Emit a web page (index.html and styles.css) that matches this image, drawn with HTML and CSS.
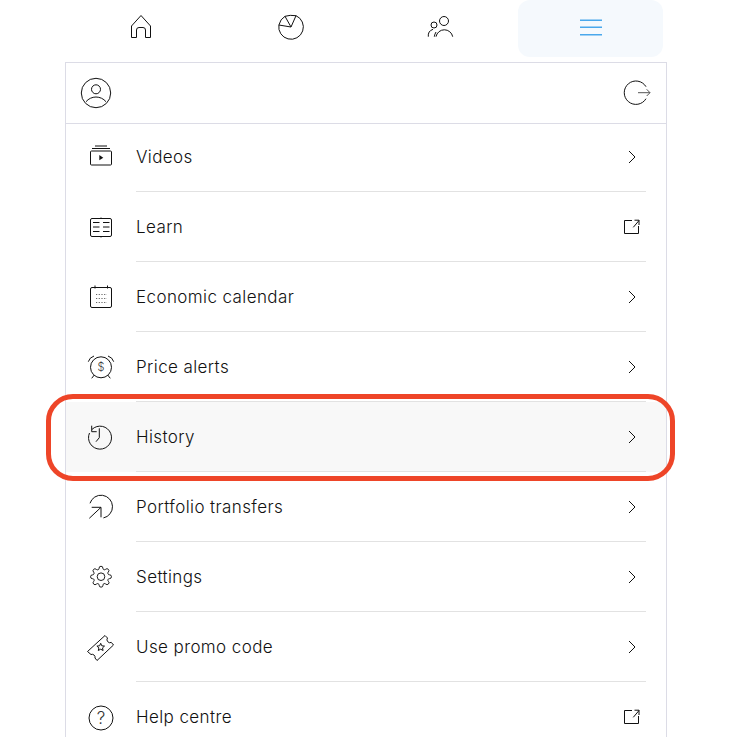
FILE: index.html
```html
<!DOCTYPE html>
<html lang="en">
<head>
<meta charset="utf-8">
<title>Menu</title>
<link rel="stylesheet" href="styles.css">
</head>
<body>
<nav class="tabs">
  <a class="tab"><svg class="ico" viewBox="0 0 32 32"><path d="M6.5 26.5V15L16 4.5 25.5 15V26.5H20.5V19Q20.5 16.5 18 16.5H14Q11.5 16.5 11.5 19V26.5Z"/></svg></a>
  <a class="tab"><svg class="ico" viewBox="0 0 32 32"><path d="M21 4.7A12.3 12.3 0 1 1 3.9 14L16 16ZM10 5.3Q15 3.7 21 4.7M10 5.3L16 16M3.9 14Q5.3 8 10 5.3"/></svg></a>
  <a class="tab"><svg class="ico" viewBox="0 0 32 32"><circle cx="19" cy="10" r="4.5"/><path d="M11 25.7A8.5 8.5 0 0 1 27.7 25.7"/><circle cx="9" cy="14" r="3"/><path d="M3.3 25.7A7 7 0 0 1 8 18.3M9.3 25.7Q9.7 23 11 21"/></svg></a>
  <a class="tab tab-active"><svg class="ico ico-menu" viewBox="0 0 32 32"><path d="M5 9.2H27M5 16.3H27M5 23.7H27"/></svg></a>
</nav>

<section class="panel">
  <header class="panel-head">
    <svg class="ico" viewBox="0 0 32 32"><circle cx="16" cy="16" r="14.7"/><circle cx="16" cy="12.3" r="4.5"/><path d="M6 24.7A13 13 0 0 1 26 24.7"/></svg>
    <svg class="ico" viewBox="0 0 32 32"><path d="M26 9.7A11.7 11.7 0 1 0 26 21.7"/><path class="grey" d="M18 15.7H30M26.7 12.3L30 15.7 26.7 19"/></svg>
  </header>
  <ul class="list">
    <li class="row">
      <svg class="ico" viewBox="0 0 32 32"><rect x="5.5" y="10" width="21" height="14" rx="1"/><path d="M7 7.5H25M10 5H22"/><path class="solid" d="M14.3 14L18.3 16.7 14.3 19.3Z"/></svg>
      <div class="row-main"><span class="label">Videos</span><svg class="trail" viewBox="0 0 24 24"><path d="M9 6L15 12 9 18"/></svg></div>
    </li>
    <li class="row">
      <svg class="ico" viewBox="0 0 32 32"><rect x="5.5" y="7.5" width="21" height="18" rx="1.5"/><path d="M16 6.5V7.5M16 25.5V26.5M8 11.5H14.5M8 16H14.5M8 20.5H14.5M18 11.5H24.5M18 16H24.5M18 20.5H24.5"/></svg>
      <div class="row-main"><span class="label">Learn</span><svg class="trail" viewBox="0 0 24 24"><path d="M12 5.5H4.5V18.5H18.5V11M13.3 12.3L19 5.5M14.5 5.2H19V10"/></svg></div>
    </li>
    <li class="row">
      <svg class="ico" viewBox="0 0 32 32"><rect x="5.5" y="6.5" width="21" height="20" rx="1.5"/><path d="M10 4.5V7.5M22.5 4.5V7.5"/><path class="dots" d="M11 13.5H22M11 17.5H22M11 21.5H22"/></svg>
      <div class="row-main"><span class="label">Economic calendar</span><svg class="trail" viewBox="0 0 24 24"><path d="M9 6L15 12 9 18"/></svg></div>
    </li>
    <li class="row">
      <svg class="ico" viewBox="0 0 32 32"><circle cx="16" cy="16.3" r="10.5"/><path d="M3.3 10.7Q4.5 6.5 9 5M28.7 10.7Q27.5 6.5 23 5M9.3 24L6.7 27.3M22.7 24L25.3 27.3"/><text class="sym sym-small" x="16" y="20.3">$</text></svg>
      <div class="row-main"><span class="label">Price alerts</span><svg class="trail" viewBox="0 0 24 24"><path d="M9 6L15 12 9 18"/></svg></div>
    </li>
    <li class="row row-hover">
      <svg class="ico" viewBox="0 0 32 32"><path d="M7 8.4A11.5 11.5 0 1 1 4.5 12M6.7 4.7V10.7H11.7M14.3 7.3V16.7L11 20.7"/></svg>
      <div class="row-main"><span class="label">History</span><svg class="trail" viewBox="0 0 24 24"><path d="M9 6L15 12 9 18"/></svg></div>
    </li>
    <li class="row">
      <svg class="ico" viewBox="0 0 32 32"><path d="M5 12.3A11.5 11.5 0 1 1 18.4 26.95M4.3 27.3L16 16.3M6.7 16.3H16V26.3"/></svg>
      <div class="row-main"><span class="label">Portfolio transfers</span><svg class="trail" viewBox="0 0 24 24"><path d="M9 6L15 12 9 18"/></svg></div>
    </li>
    <li class="row">
      <svg class="ico" viewBox="0 0 32 32"><g transform="translate(4.6 4.3) scale(.95)"><circle cx="12" cy="12" r="4"/><path d="M19.4 15a1.65 1.65 0 0 0 .33 1.82l.06.06a2 2 0 0 1 0 2.83 2 2 0 0 1-2.83 0l-.06-.06a1.65 1.65 0 0 0-1.82-.33 1.65 1.65 0 0 0-1 1.51V21a2 2 0 0 1-2 2 2 2 0 0 1-2-2v-.09A1.65 1.65 0 0 0 9 19.4a1.65 1.65 0 0 0-1.82.33l-.06.06a2 2 0 0 1-2.83 0 2 2 0 0 1 0-2.83l.06-.06a1.65 1.65 0 0 0 .33-1.82 1.65 1.65 0 0 0-1.51-1H3a2 2 0 0 1-2-2 2 2 0 0 1 2-2h.09A1.65 1.65 0 0 0 4.6 9a1.65 1.65 0 0 0-.33-1.82l-.06-.06a2 2 0 0 1 0-2.83 2 2 0 0 1 2.83 0l.06.06a1.65 1.65 0 0 0 1.82.33H9a1.65 1.65 0 0 0 1-1.51V3a2 2 0 0 1 2-2 2 2 0 0 1 2 2v.09a1.65 1.65 0 0 0 1 1.51 1.65 1.65 0 0 0 1.82-.33l.06-.06a2 2 0 0 1 2.83 0 2 2 0 0 1 0 2.83l-.06.06a1.65 1.65 0 0 0-.33 1.82V9a1.65 1.65 0 0 0 1.51 1H21a2 2 0 0 1 2 2 2 2 0 0 1-2 2h-.09a1.65 1.65 0 0 0-1.51 1z"/></g></svg>
      <div class="row-main"><span class="label">Settings</span><svg class="trail" viewBox="0 0 24 24"><path d="M9 6L15 12 9 18"/></svg></div>
    </li>
    <li class="row">
      <svg class="ico" viewBox="0 0 32 32"><path d="M2.5 20.5L20 4.5 22.5 7A3 3 0 0 0 26.3 11.4L28.5 14 12 29.5 10 27A3 3 0 0 0 6 23.5Z"/><path d="M15.7 12.3L16.8 14.8 19.5 15.1 17.5 16.9 18.1 19.5 15.7 18.2 13.3 19.5 13.9 16.9 11.9 15.1 14.6 14.8Z"/></svg>
      <div class="row-main"><span class="label">Use promo code</span><svg class="trail" viewBox="0 0 24 24"><path d="M9 6L15 12 9 18"/></svg></div>
    </li>
    <li class="row">
      <svg class="ico" viewBox="0 0 32 32"><circle cx="16" cy="17" r="12"/><text class="sym" x="16" y="23">?</text></svg>
      <div class="row-main"><span class="label">Help centre</span><svg class="trail" viewBox="0 0 24 24"><path d="M12 5.5H4.5V18.5H18.5V11M13.3 12.3L19 5.5M14.5 5.2H19V10"/></svg></div>
    </li>
  </ul>
</section>

<div class="highlight"></div>
</body>
</html>
```
FILE: styles.css
```css
html, body {
  margin: 0;
  height: 100%;
  overflow: hidden;
  background: #fff;
}
body {
  position: relative;
  font-family: Inter, "Liberation Sans", sans-serif;
  color: #111;
}
.ico, .trail {
  display: block;
  flex: none;
  fill: none;
  stroke: #111;
  stroke-width: 1;
}
.ico { width: 32px; height: 32px; }
.trail { width: 24px; height: 24px; }
.ico-menu { stroke: #4aa8ec; stroke-width: 1.6; }
.grey { stroke: #555; }
.solid { fill: #111; stroke: none; }
.dots { stroke: #666; stroke-width: 1.2; stroke-dasharray: 1.2 1.5; }
.sym {
  fill: #333;
  stroke: none;
  font-family: Inter, "Liberation Sans", sans-serif;
  font-size: 17px;
  font-weight: 300;
  text-anchor: middle;
}
.sym-small { font-size: 11px; font-weight: 300; }

.tabs {
  display: flex;
  gap: 5px;
  padding-left: 68px;
}
.tab {
  display: flex;
  justify-content: center;
  width: 145px;
  height: 57px;
  padding-top: 11px;
  box-sizing: border-box;
  border-radius: 12px;
}
.tab-active { background: #f5f9fd; }

.panel {
  width: 602px;
  margin: 5px 0 0 65px;
  box-sizing: border-box;
  border: 1px solid #dcdce6;
  border-bottom: 0;
}
.panel-head {
  display: flex;
  justify-content: space-between;
  align-items: center;
  height: 61px;
  padding: 0 14px;
  box-sizing: border-box;
  border-bottom: 1px solid #dcdce6;
}
.list {
  list-style: none;
  margin: -2px 0 0;
  padding: 0;
}
.row {
  display: flex;
  align-items: center;
  gap: 19px;
  height: 70px;
  padding: 0 20px 0 19px;
}
.row-hover { background: #f8f8f8; }
.row-main {
  flex: 1;
  align-self: stretch;
  display: flex;
  align-items: center;
  justify-content: space-between;
  padding-right: 2px;
  box-shadow: inset 0 -1px 0 #e2e2e2;
}
.label {
  font-size: 17px;
  font-weight: 300;
  letter-spacing: .4px;
  line-height: 24px;
}
.highlight {
  position: absolute;
  left: 46px;
  top: 394px;
  width: 629px;
  height: 87px;
  box-sizing: border-box;
  border: 5px solid #ee4528;
  border-radius: 27px;
  pointer-events: none;
}
```
